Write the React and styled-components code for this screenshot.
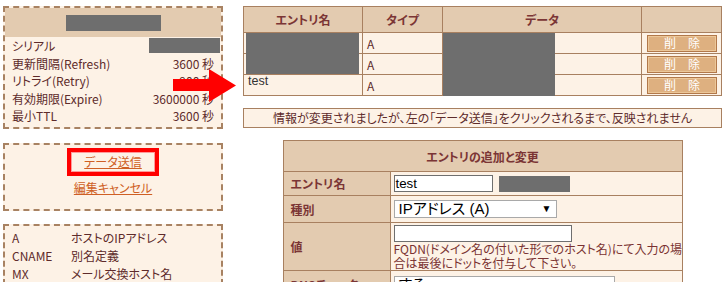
import React from "react";
import styled, { createGlobalStyle } from "styled-components";

const GlobalStyle = createGlobalStyle`
  html, body { margin: 0; padding: 0; background: #fff; }
  body {
    font-family: "Noto Sans CJK JP", "Liberation Sans", sans-serif;
    font-size: 12px;
    color: #5e2b2b;
    font-feature-settings: "palt";
  }
  * { box-sizing: border-box; }
`;

const C = {
  tan: "#e3cbb0",
  cream: "#fdf2e6",
  line: "#a88060",
  dash: "#a88262",
  text: "#5e2b2b",
  head: "#7b3535",
  grey: "#6e6e6e",
  link: "#cf5f24",
};

const Page = styled.div`
  position: relative;
  display: flex;
  align-items: flex-start;
  gap: 20px;
  width: 727px;
  height: 282px;
  padding: 6px 0 0 3px;
  overflow: hidden;
`;

const LeftCol = styled.div`
  width: 220px;
  display: flex;
  flex-direction: column;
`;

const Panel = styled.div`
  border: 2px dashed ${C.dash};
  background: ${C.cream};
  margin-top: ${(p) => p.$mt || 0}px;
`;

const PanelHead = styled.div`
  height: 29px;
  background: ${C.tan};
  display: flex;
  align-items: center;
  justify-content: center;
`;

const Redact = styled.div`
  background: ${C.grey};
  width: ${(p) => p.$w}px;
  height: ${(p) => p.$h}px;
  flex: none;
  margin-left: ${(p) => p.$ml || 0}px;
`;

const InfoBody = styled.div`
  padding: 0 7px 2px 7px;
`;

const InfoRow = styled.div`
  display: flex;
  justify-content: space-between;
  align-items: center;
  height: 17.6px;
  line-height: 17.6px;
  white-space: nowrap;
`;

const SerialBlock = styled(Redact)`
  margin-right: -6px;
  align-self: flex-start;
  margin-top: 1px;
`;

const LinkBox = styled.div`
  display: flex;
  flex-direction: column;
  align-items: center;
  padding: 3px 0 12px;
`;

const Highlight = styled.div`
  border: 4px solid #ff0000;
  box-shadow: inset 0 0 0 1px #ff9a9a;
  padding: 1px 13px;
  line-height: 18px;
`;

const TextLink = styled.a`
  color: ${C.link};
  text-decoration: underline;
  line-height: 18px;
  margin-top: ${(p) => p.$mt || 0}px;
  cursor: pointer;
`;

const TypeList = styled.div`
  display: grid;
  grid-template-columns: 59px auto;
  padding: 3px 7px 0;
  line-height: 18px;
`;

const RightCol = styled.div`
  width: 479px;
  display: flex;
  flex-direction: column;
`;

const GridTable = styled.div`
  position: relative;
  display: grid;
  grid-template-columns: ${(p) => p.$cols};
  grid-template-rows: ${(p) => p.$rows};
  gap: 1px;
  background: ${C.line};
  border: 1px solid ${C.line};
  width: ${(p) => p.$w}px;
  margin: ${(p) => p.$margin || 0};
`;

const Th = styled.div`
  background: ${C.tan};
  color: ${C.head};
  font-weight: 700;
  display: flex;
  align-items: center;
  justify-content: ${(p) => (p.$left ? "flex-start" : "center")};
  padding-left: ${(p) => (p.$left ? 7 : 0)}px;
  grid-column: ${(p) => (p.$span ? "1 / -1" : "auto")};
  white-space: nowrap;
`;

const Td = styled.div`
  background: ${C.cream};
  display: flex;
  align-items: ${(p) => (p.$top ? "flex-start" : "center")};
  padding-left: ${(p) => p.$pl ?? 4}px;
  overflow: hidden;
`;

const LatinText = styled.span`
  font-family: "Liberation Sans", Arial, sans-serif;
  font-size: 12.5px;
  color: #333;
  line-height: 13px;
  margin-top: 0px;
`;

const TypeText = styled.span`
  line-height: 14px;
  padding-top: 1px;
`;

const DelButton = styled.button`
  width: 70px;
  height: 17px;
  margin-left: 1px;
  padding: 0;
  border: 1px solid #b2784a;
  box-shadow: inset 0 0 0 1px #ecc799;
  background: #deb080;
  color: #fff;
  font-family: inherit;
  font-size: 12px;
  line-height: 14px;
  font-feature-settings: normal;
`;

const Overlay = styled.div`
  position: absolute;
  background: ${C.grey};
`;

const Notice = styled.div`
  margin-top: 12px;
  height: 20px;
  border: 1px solid ${C.line};
  background: ${C.cream};
  text-align: center;
  line-height: 18px;
  white-space: nowrap;
`;

const FieldCell = styled(Td)`
  flex-direction: ${(p) => (p.$col ? "column" : "row")};
  align-items: ${(p) => (p.$col ? "flex-start" : "center")};
  justify-content: flex-start;
  padding-top: ${(p) => p.$pt || 0}px;
  padding-left: 3px;
`;

const TextInput = styled.div`
  width: ${(p) => p.$w}px;
  height: 17px;
  border: 1px solid #6f6f6f;
  background: #fff;
  font-family: "Liberation Sans", Arial, sans-serif;
  font-size: 13.33px;
  line-height: 15px;
  color: #000;
  padding-left: 1px;
  flex: none;
`;

const FakeSelect = styled.div`
  width: ${(p) => p.$w}px;
  height: 18px;
  border: 1px solid #a9a9a9;
  background: #fff;
  display: flex;
  align-items: center;
  justify-content: space-between;
  padding: 0 4px 0 4px;
  font-family: "Liberation Sans", "Noto Sans CJK JP", sans-serif;
  font-size: 15px;
  color: #000;
  line-height: 16px;
  flex: none;
`;

const SelArrow = styled.span`
  font-size: 10px;
  line-height: 10px;
`;

const Help = styled.div`
  color: #7a3232;
  line-height: 14px;
  white-space: nowrap;
`;

const Arrow = styled.svg`
  position: absolute;
  left: 173px;
  top: 69px;
`;

export default function App() {
  return (
    <>
      <GlobalStyle />
      <Page>
        <LeftCol>
          <Panel>
            <PanelHead>
              <Redact $w={95} $h={16} />
            </PanelHead>
            <InfoBody>
              <InfoRow>
                <span>シリアル</span>
                <SerialBlock $w={71} $h={15} />
              </InfoRow>
              <InfoRow>
                <span>更新間隔(Refresh)</span>
                <span>3600 秒</span>
              </InfoRow>
              <InfoRow>
                <span>リトライ(Retry)</span>
                <span>900 秒</span>
              </InfoRow>
              <InfoRow>
                <span>有効期限(Expire)</span>
                <span>3600000 秒</span>
              </InfoRow>
              <InfoRow>
                <span>最小TTL</span>
                <span>3600 秒</span>
              </InfoRow>
            </InfoBody>
          </Panel>

          <Panel $mt={14}>
            <LinkBox>
              <Highlight>
                <TextLink>データ送信</TextLink>
              </Highlight>
              <TextLink $mt={3}>編集キャンセル</TextLink>
            </LinkBox>
          </Panel>

          <Panel $mt={13}>
            <TypeList>
              <span>A</span>
              <span>ホストのIPアドレス</span>
              <span>CNAME</span>
              <span>別名定義</span>
              <span>MX</span>
              <span>メール交換ホスト名</span>
            </TypeList>
          </Panel>
        </LeftCol>

        <RightCol>
          <GridTable
            $w={479}
            $cols="118px 79px 198px 79px"
            $rows="25px 20px 20px 20px"
          >
            <Th>エントリ名</Th>
            <Th>タイプ</Th>
            <Th>データ</Th>
            <Th />

            <Td />
            <Td><TypeText>A</TypeText></Td>
            <Td />
            <Td><DelButton>削　除</DelButton></Td>

            <Td />
            <Td><TypeText>A</TypeText></Td>
            <Td />
            <Td><DelButton>削　除</DelButton></Td>

            <Td $top $pl={4}><LatinText>test</LatinText></Td>
            <Td><TypeText>A</TypeText></Td>
            <Td />
            <Td><DelButton>削　除</DelButton></Td>

            <Overlay style={{ left: 2, top: 26, width: 113, height: 41 }} />
            <Overlay style={{ left: 199, top: 26, width: 112, height: 63 }} />
          </GridTable>

          <Notice>
            情報が変更されましたが、左の「データ送信」をクリックされるまで、反映されません
          </Notice>

          <GridTable
            $w={400}
            $cols="106px 291px"
            $rows="30px 23px 26px 47px 26px"
            $margin="12px auto 0"
          >
            <Th $span>エントリの追加と変更</Th>

            <Th $left>エントリ名</Th>
            <FieldCell>
              <TextInput $w={99}>test</TextInput>
              <Redact $w={71} $h={16} $ml={6} />
            </FieldCell>

            <Th $left>種別</Th>
            <FieldCell>
              <FakeSelect $w={163}>
                <span>IPアドレス (A)</span>
                <SelArrow>▼</SelArrow>
              </FakeSelect>
            </FieldCell>

            <Th $left>値</Th>
            <FieldCell $col $pt={2}>
              <TextInput $w={178} />
              <Help>
                FQDN(ドメイン名の付いた形でのホスト名)にて入力の場
                <br />
                合は最後にドットを付与して下さい。
              </Help>
            </FieldCell>

            <Th $left>DNSチェック</Th>
            <FieldCell $col $pt={5}>
              <FakeSelect $w={221}>
                <span>する</span>
                <SelArrow>▼</SelArrow>
              </FakeSelect>
            </FieldCell>
          </GridTable>
        </RightCol>

        <Arrow width="64" height="34" viewBox="0 0 64 34">
          <polygon
            points="0,10 36,10 36,0 63,16.5 36,33 36,22 0,22"
            fill="#ff0000"
          />
        </Arrow>
      </Page>
    </>
  );
}
